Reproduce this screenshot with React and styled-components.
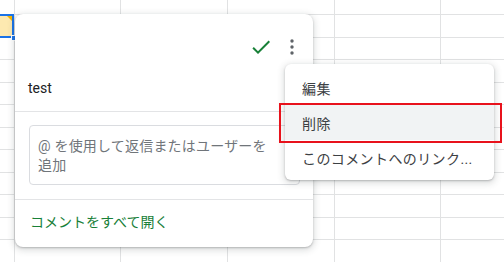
import React from 'react';
import styled, { createGlobalStyle } from 'styled-components';

const GlobalStyle = createGlobalStyle`
  html, body {
    margin: 0;
    padding: 0;
    background: #ffffff;
  }
  body {
    font-family: Roboto, 'Noto Sans CJK JP', sans-serif;
  }
`;

const Page = styled.div`
  position: relative;
  width: 504px;
  height: 262px;
  overflow: hidden;
  background: #ffffff;
`;

// spreadsheet behind the popups: a 1px gap grid gives the cell lines
const Sheet = styled.div`
  display: grid;
  grid-template-columns: 14px 105px 106px 106px 105px 106px;
  grid-template-rows: 14px 22px 21px 22px 21px 22px 21px 22px 21px 22px 21px 22px;
  gap: 1px;
  background: #e1e2e3;
  width: 560px;
`;

const Cell = styled.div`
  background: #ffffff;
`;

const SelectedCell = styled.div`
  position: relative;
  background: #fde9b0;
  box-shadow: inset 0 2px 0 #1a73e8, inset -2px 0 0 #1a73e8, inset 0 -2px 0 #1a73e8;
  margin: -1px 0 -1px 0;

  &::before {
    content: '';
    position: absolute;
    top: 2px;
    right: 2px;
    border-style: solid;
    border-width: 0 5px 5px 0;
    border-color: transparent #f4b400 transparent transparent;
  }
`;

const Handle = styled.span`
  position: absolute;
  right: -3px;
  bottom: -3px;
  width: 6px;
  height: 6px;
  background: #1a73e8;
  border: 1px solid #ffffff;
  box-sizing: border-box;
`;

const Card = styled.div`
  position: absolute;
  left: 15px;
  top: 14px;
  width: 298px;
  height: 233px;
  background: #ffffff;
  border-radius: 8px;
  box-shadow: 0 1px 2px rgba(60, 64, 67, 0.3), 0 2px 6px 2px rgba(60, 64, 67, 0.15);
  display: flex;
  flex-direction: column;
  box-sizing: border-box;
`;

const Header = styled.div`
  display: flex;
  justify-content: flex-end;
  align-items: center;
  gap: 7px;
  padding: 21px 9px 0 0;
`;

const IconBox = styled.span`
  display: flex;
  width: 24px;
  height: 24px;
  align-items: center;
  justify-content: center;
  color: ${(p) => p.$color || '#5f6368'};
`;

const Body = styled.div`
  padding: 19px 14px 13px 13px;
  font-size: 14px;
  line-height: 20px;
  color: #202124;
`;

const Divider = styled.div`
  height: 1px;
  background: #e3e4e6;
`;

const Reply = styled.div`
  padding: 13px 13px 14px 14px;
`;

const ReplyBox = styled.div`
  height: 60px;
  box-sizing: border-box;
  border: 1px solid #dadce0;
  border-radius: 4px;
  padding: 11px 20px 0 8px;
  font-size: 14px;
  line-height: 19px;
  letter-spacing: 0.2px;
  color: #70757a;
  font-family: Roboto, 'Noto Sans CJK JP', sans-serif;
`;

const Footer = styled.div`
  padding: 12px 15px 0;
  font-size: 14px;
  line-height: 20px;
  color: #188038;
  font-family: Roboto, 'Noto Sans CJK JP', sans-serif;
`;

const Menu = styled.div`
  position: absolute;
  left: 285px;
  top: 64px;
  width: 209px;
  height: 116px;
  box-sizing: border-box;
  padding: 6px 0 5px;
  background: #ffffff;
  border-radius: 6px;
  box-shadow: 0 1px 2px rgba(60, 64, 67, 0.3), 0 2px 6px 2px rgba(60, 64, 67, 0.15);
  display: flex;
  flex-direction: column;
`;

const MenuItem = styled.div`
  height: 35px;
  display: flex;
  align-items: center;
  padding: 0 17px;
  font-size: 14px;
  letter-spacing: 0.4px;
  color: #3c4043;
  background: ${(p) => (p.$active ? '#f1f3f4' : 'transparent')};
  white-space: nowrap;
  font-family: Roboto, 'Noto Sans CJK JP', sans-serif;
`;

const Annotation = styled.div`
  position: absolute;
  left: 279px;
  top: 103px;
  width: 223px;
  height: 40px;
  box-sizing: border-box;
  border: 2px solid #e8121c;
  pointer-events: none;
`;

const CheckIcon = () => (
  <svg width="24" height="24" viewBox="0 0 24 24" fill="currentColor">
    <path d="M9 16.17L4.83 12l-1.42 1.41L9 19 21 7l-1.41-1.41z" />
  </svg>
);

const MoreIcon = () => (
  <svg width="24" height="24" viewBox="0 0 24 24" fill="currentColor">
    <circle cx="12" cy="6" r="1.7" />
    <circle cx="12" cy="12" r="1.7" />
    <circle cx="12" cy="18" r="1.7" />
  </svg>
);

const COLS = 6;
const ROWS = 12;

const App = () => {
  const cells = [];
  for (let r = 0; r < ROWS; r++) {
    for (let c = 0; c < COLS; c++) {
      if (r === 1 && c === 0) {
        cells.push(
          <SelectedCell key={`${r}-${c}`}>
            <Handle />
          </SelectedCell>
        );
      } else {
        cells.push(<Cell key={`${r}-${c}`} />);
      }
    }
  }

  return (
    <Page>
      <GlobalStyle />
      <Sheet>{cells}</Sheet>

      <Card>
        <Header>
          <IconBox $color="#188038">
            <CheckIcon />
          </IconBox>
          <IconBox>
            <MoreIcon />
          </IconBox>
        </Header>
        <Body>test</Body>
        <Divider />
        <Reply>
          <ReplyBox>@ を使用して返信またはユーザーを追加</ReplyBox>
        </Reply>
        <Divider />
        <Footer>コメントをすべて開く</Footer>
      </Card>

      <Menu>
        <MenuItem>編集</MenuItem>
        <MenuItem $active>削除</MenuItem>
        <MenuItem>このコメントへのリンク...</MenuItem>
      </Menu>

      <Annotation />
    </Page>
  );
};

export default App;
